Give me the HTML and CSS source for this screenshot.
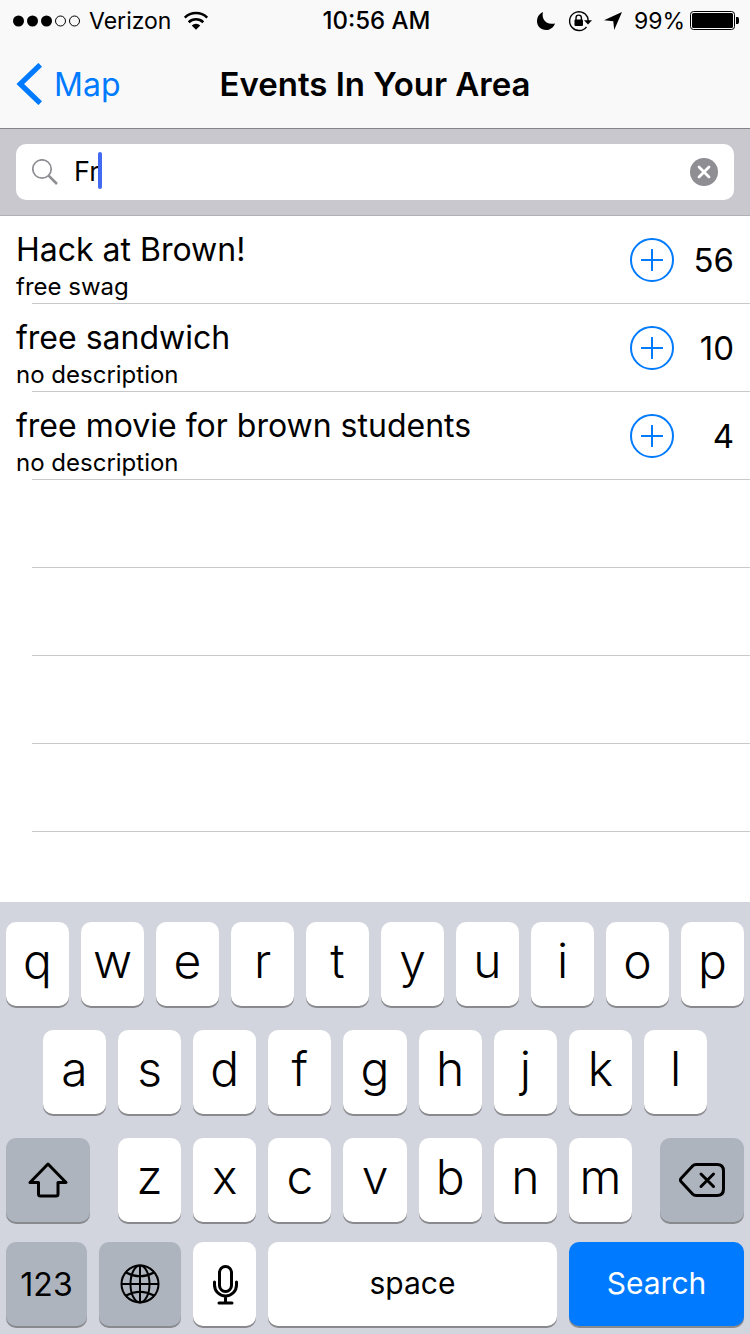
FILE: index.html
```html
<!DOCTYPE html>
<html lang="en">
<head>
<meta charset="utf-8">
<meta name="viewport" content="width=device-width, initial-scale=1">
<title>Events In Your Area</title>
<link rel="stylesheet" href="styles.css">
</head>
<body>
<div class="app">
  <div class="status">
    <div class="status-left">
      <svg class="signal" width="68" height="12" viewBox="0 0 68 12" aria-hidden="true">
        <circle cx="5.500" cy="6" r="5.500"/><circle cx="19.500" cy="6" r="5.500"/><circle cx="33.500" cy="6" r="5.500"/>
        <g fill="none" stroke="#000"><circle cx="47.500" cy="6" r="5"/><circle cx="61.500" cy="6" r="5"/></g>
      </svg>
      <span class="carrier">Verizon</span>
      <svg class="wifi" width="26" height="20" viewBox="0 0 26 20" aria-hidden="true">
        <g fill="none" stroke="#000" stroke-width="2.600"><path d="M1.800 6.600a16 16 0 0 1 22.400 0"/><path d="M5.700 11.200a10.500 10.500 0 0 1 14.600 0"/></g>
        <path d="M8.700 14.400a6.200 6.200 0 0 1 8.600 0L13 18.800z"/>
      </svg>
    </div>
    <time class="clock">10:56 AM</time>
    <div class="status-right">
      <svg width="20" height="20" viewBox="0 0 20 20" aria-hidden="true"><path d="M7 1C5.300 7.600 9.600 14.600 19 12.400C17.500 16.500 14 19 10 19C5 19 1 15 1 10.200C1 6 3.500 2.500 7 1z"/></svg>
      <svg class="lock" width="24" height="22" viewBox="0 0 24 22" aria-hidden="true">
        <path d="M19.600 7.300A9.400 9.400 0 1 0 18.500 16.800" fill="none" stroke="#000" stroke-width="1.400"/><path d="M19.500 7L20.300 11" stroke="#000" stroke-width="1.400"/>
        <path d="M16 10.200h8l-4 4.200z"/><rect x="6.500" y="9.500" width="8.500" height="6.500" rx="1"/>
        <path d="M8 10V7.800a2.700 2.700 0 0 1 5.400 0V10" fill="none" stroke="#000" stroke-width="1.400"/>
      </svg>
      <svg class="arrow" width="20" height="20" viewBox="0 0 20 20" aria-hidden="true"><path d="M19 1L11.200 19L10.300 10.200L1 9.200z"/></svg>
      <span>99%</span>
      <svg class="battery" width="50" height="20" viewBox="0 0 50 20" aria-hidden="true">
        <rect x=".5" y=".5" width="44" height="18" rx="3" fill="none" stroke="#000"/><rect x="2" y="2" width="41" height="15" rx="1.500"/><path d="M46 6h1.500q1.500 0 1.500 2v3q0 2-1.500 2H46z"/>
      </svg>
    </div>
  </div>

  <header class="nav">
    <a class="back" href="#map">
      <svg width="26" height="42" viewBox="0 0 26 42" aria-hidden="true"><path d="M24.200 1.800L4.200 21L24.200 40.200" fill="none" stroke="currentColor" stroke-width="5.200"/></svg>
      Map
    </a>
    <h1 class="title">Events In Your Area</h1>
  </header>

  <form class="search-bar" role="search">
    <div class="field">
      <svg class="glass" width="26" height="26" viewBox="0 0 26 26" aria-hidden="true" fill="none" stroke="#8e8e93"><circle cx="10" cy="10" r="9.200" stroke-width="1.700"/><path d="M16.600 16.600L25 25" stroke-width="2.600"/></svg>
      <input class="query" type="text" value="Fr" aria-label="Search events">
      <span class="caret"></span>
      <button class="clear" type="button" aria-label="Clear">
        <svg width="28" height="28" viewBox="0 0 28 28"><circle cx="14" cy="14" r="14" fill="#8e8e93"/><path d="M9 9l10 10M19 9L9 19" stroke="#fff" stroke-width="2.800" stroke-linecap="round"/></svg>
      </button>
    </div>
  </form>

  <ul class="events">
    <li class="event">
      <div class="info"><div class="name">Hack at Brown!</div><div class="desc">free swag</div></div>
      <button class="add" type="button" aria-label="Vote for Hack at Brown!"><svg width="44" height="44" viewBox="0 0 44 44" fill="none" stroke="currentColor" stroke-width="2"><circle cx="22" cy="22" r="21"/><path d="M11 22h22M22 11v22"/></svg></button>
      <span class="count">56</span>
    </li>
    <li class="event">
      <div class="info"><div class="name">free sandwich</div><div class="desc">no description</div></div>
      <button class="add" type="button" aria-label="Vote for free sandwich"><svg width="44" height="44" viewBox="0 0 44 44" fill="none" stroke="currentColor" stroke-width="2"><circle cx="22" cy="22" r="21"/><path d="M11 22h22M22 11v22"/></svg></button>
      <span class="count">10</span>
    </li>
    <li class="event">
      <div class="info"><div class="name">free movie for brown students</div><div class="desc">no description</div></div>
      <button class="add" type="button" aria-label="Vote for free movie for brown students"><svg width="44" height="44" viewBox="0 0 44 44" fill="none" stroke="currentColor" stroke-width="2"><circle cx="22" cy="22" r="21"/><path d="M11 22h22M22 11v22"/></svg></button>
      <span class="count">4</span>
    </li>
    <li class="event"></li>
    <li class="event"></li>
    <li class="event"></li>
    <li class="event"></li>
  </ul>

  <div class="keyboard">
    <div class="keys">
      <button class="key">q</button><button class="key">w</button><button class="key">e</button><button class="key">r</button><button class="key">t</button><button class="key">y</button><button class="key">u</button><button class="key">i</button><button class="key">o</button><button class="key">p</button>
    </div>
    <div class="keys keys-home">
      <button class="key">a</button><button class="key">s</button><button class="key">d</button><button class="key">f</button><button class="key">g</button><button class="key">h</button><button class="key">j</button><button class="key">k</button><button class="key">l</button>
    </div>
    <div class="keys keys-lower">
      <button class="key key-dark" aria-label="Shift"><svg width="40" height="36" viewBox="0 0 40 36" fill="none" stroke="#000" stroke-width="3" stroke-linejoin="round"><path d="M20 2L38 20.500H30V32q0 2-2 2H12.500q-2 0-2-2V20.500H2z"/></svg></button>
      <div class="letters">
        <button class="key">z</button><button class="key">x</button><button class="key">c</button><button class="key">v</button><button class="key">b</button><button class="key">n</button><button class="key">m</button>
      </div>
      <button class="key key-dark" aria-label="Delete"><svg width="46" height="34" viewBox="0 0 46 34" fill="none" stroke="#000" stroke-width="3" stroke-linejoin="round" stroke-linecap="round"><path d="M17 1.500H38q6.500 0 6.500 6.500V26q0 6.500-6.500 6.500H17q-2 0-3.200-1.300L2.200 18.800q-1.500-1.800 0-3.600L13.800 2.800Q15 1.500 17 1.500z"/><path d="M22 11l12.500 12.500M34.500 11L22 23.500"/></svg></button>
    </div>
    <div class="keys keys-bottom">
      <button class="key key-dark key-num">123</button>
      <button class="key key-dark" aria-label="Next keyboard"><svg width="40" height="40" viewBox="0 0 40 40" fill="none" stroke="#000" stroke-width="2"><circle cx="20" cy="20" r="18.500"/><path d="M20 1.500v37M1.500 20h37"/><ellipse cx="20" cy="20" rx="9.500" ry="18.500"/><path d="M6 8.500q14 7.500 28 0M6 31.500q14-7.500 28 0"/></svg></button>
      <button class="key" aria-label="Dictate"><svg width="26" height="42" viewBox="0 0 26 42" fill="none" stroke="#000" stroke-width="3" stroke-linecap="round"><rect x="7.500" y="3.500" width="12" height="25" rx="6"/><path d="M2.500 19v3a11 11 0 0 0 22 0v-3M13.500 33v7M7 40h13"/></svg></button>
      <button class="key key-word">space</button>
      <button class="key key-blue key-word">Search</button>
    </div>
  </div>
</div>
</body>
</html>
```
FILE: styles.css
```css
* { box-sizing: border-box; }

body {
  margin: 0;
  background: #fff;
  color: #000;
  font-family: Inter, "Liberation Sans", sans-serif;
}

button, input { font: inherit; color: inherit; border: 0; padding: 0; margin: 0; background: none; }
svg { display: block; flex: none; }

.app { display: flex; flex-direction: column; min-height: 100vh; }

.status {
  display: grid;
  grid-template-columns: 1fr auto 1fr;
  align-items: center;
  height: 40px;
  padding: 2px 10px 0 13px;
  background: #f9f9f9;
  font-size: 23px;
  line-height: 38px;
}
.status-left, .status-right { display: flex; align-items: center; }
.status-right { justify-content: flex-end; }
.carrier { margin: 0 12px 0 8px; }
.clock { font-size: 24px; font-weight: 500; }
.lock { margin-left: 12px; }
.arrow { margin: 0 11px; }
.battery { margin-left: 5px; }

.nav {
  display: grid;
  grid-template-columns: 1fr auto 1fr;
  align-items: center;
  height: 89px;
  padding: 0 16px;
  background: #f9f9f9;
  border-bottom: 1px solid #858488;
}
.back {
  display: flex;
  align-items: center;
  gap: 12px;
  color: #007aff;
  font-size: 32px;
  text-decoration: none;
}
.title { margin: 0; font-size: 33px; line-height: 44px; font-weight: 600; }

.search-bar { padding: 15px 16px; background: #c9c8ce; border-bottom: 1px solid #b2b1b6; }
.field {
  display: flex;
  align-items: center;
  height: 56px;
  padding: 0 16px;
  border-radius: 10px;
  background: #fff;
}
.glass { margin-right: 16px; }
.query { field-sizing: content; font-size: 27px; line-height: 36px; outline: 0; }
.caret { width: 4px; height: 37px; margin: 0 0 3px -1px; border-radius: 2px; background: #426bf2; }
.clear { margin-left: auto; }

.events { flex: 1; margin: 0; padding: 0; list-style: none; }
.event {
  display: flex;
  align-items: center;
  height: 88px;
  padding-right: 16px;
  background: linear-gradient(#c8c7cc, #c8c7cc) 32px 100% / 100% 1px no-repeat;
}
.info { flex: 1; padding: 10px 0 0 16px; }
.name { font-size: 32px; line-height: 44px; }
.desc { font-size: 24px; line-height: 30px; }
.add { color: #007aff; }
.count { width: 60px; font-size: 33px; line-height: 44px; text-align: right; }

.keyboard {
  display: flex;
  flex-direction: column;
  gap: 24px;
  padding: 20px 6px 8px;
  background: #d2d5dd;
}
.keys, .letters { display: flex; gap: 12px; }
.keys-home { padding: 0 5%; }
.keys-lower { display: grid; grid-template-columns: 84fr 514fr 84fr; gap: 28px; }
.keys-bottom { display: grid; grid-template-columns: 81fr 82fr 63fr 289fr 175fr; margin-top: -4px; }
.key {
  flex: 1;
  min-width: 0;
  display: flex;
  align-items: center;
  justify-content: center;
  height: 84px;
  padding-bottom: 8px;
  border-radius: 10px;
  background: #fff;
  box-shadow: 0 2px 0 #898a8d;
  font-size: 48px;
  font-weight: 350;
}
.key-word { padding-bottom: 2px; font-size: 30px; font-weight: 400; }
.key-num { padding-bottom: 0; font-size: 32px; font-weight: 400; }
.key[aria-label] { padding-bottom: 0; }
.key-dark { background: #adb4be; }
.key-blue { background: #007aff; color: #fff; }
```
